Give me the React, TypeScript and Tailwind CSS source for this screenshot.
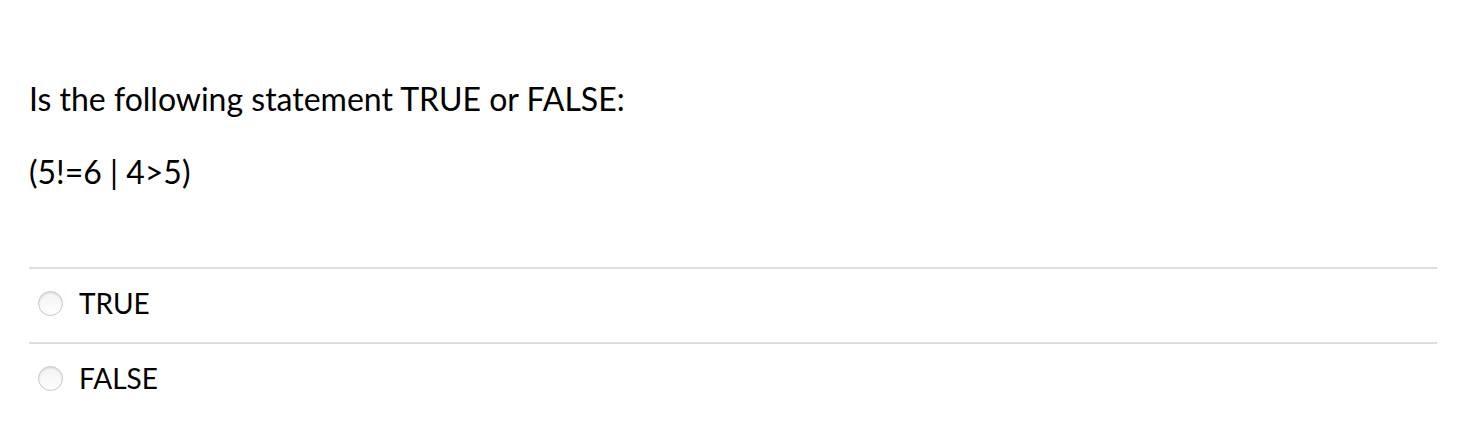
import React from 'react';

const Radio: React.FC = () => (
  <span className="inline-block w-[25px] h-[25px] rounded-full border border-[#c8c8c8] bg-gradient-to-b from-[#f2f2f2] to-white shadow-[inset_0_1px_2px_rgba(0,0,0,0.12)] shrink-0" />
);

const App: React.FC = () => {
  const options = ['TRUE', 'FALSE'];

  return (
    <div className="w-[1457px] h-[443px] bg-white text-black font-['Lato','Liberation_Sans',sans-serif] pl-[29px] pr-[20px]">
      <p className="pt-[79px] text-[32px] leading-[40px]">Is the following statement TRUE or FALSE:</p>
      <p className="mt-[33px] text-[32px] leading-[40px]">(5!=6 | 4&gt;5)</p>

      <div className="mt-[75px]">
        {options.map((opt) => (
          <div key={opt} className="border-t-2 border-[#dcdcdc] h-[75px] pb-[5px] flex items-center gap-[16px] pl-[9px]">
            <Radio />
            <span className="text-[28px] leading-[36px]">{opt}</span>
          </div>
        ))}
      </div>
    </div>
  );
};

export default App;
